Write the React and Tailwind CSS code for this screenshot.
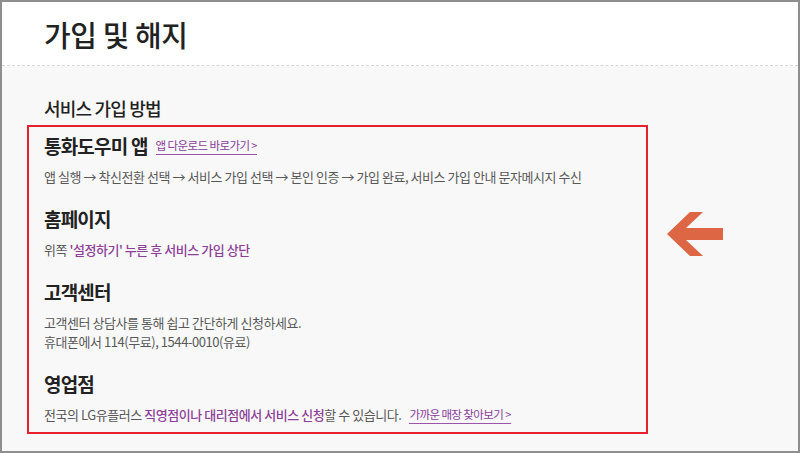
import React from 'react';

const font = { fontFamily: '"Noto Sans CJK KR", "Noto Sans", sans-serif' };

// Small underlined purple link
const MoreLink = ({ children }) => (
  <span className="ml-[8px] text-[11.5px] leading-[16px] tracking-[-0.6px] text-[#8a3d9d] border-b border-[#9a55aa] pb-[1px] whitespace-nowrap">
    {children}&nbsp;<span className="text-[11px]">&gt;</span>
  </span>
);

const Group = ({ title, link, children, first }) => (
  <div className={first ? '' : 'mt-[21px]'}>
    <div className="flex items-center">
      <h3 className="text-[19px] leading-[24px] font-bold tracking-[-0.8px] text-[#222]">{title}</h3>
      {link && <MoreLink>{link}</MoreLink>}
    </div>
    <div className="mt-[9px] text-[13px] leading-[19px] tracking-[-0.45px] text-[#585858]">{children}</div>
  </div>
);

export default function App() {
  return (
    <div style={font} className="w-[800px] h-[453px] border-2 border-[#8e8e8e] bg-[#f8f8f8] flex flex-col overflow-hidden">
      {/* page header */}
      <div className="h-[64px] shrink-0 bg-white border-b border-dashed border-[#d6d6d6] flex items-center pl-[42px]">
        <h1 className="text-[29px] leading-[36px] font-medium tracking-[-0.4px] text-[#222]">가입 및 해지</h1>
      </div>

      <div className="relative flex-1 pt-[30px]">
        <h2 className="ml-[42px] text-[18px] leading-[24px] font-medium tracking-[-0.8px] text-[#222]">서비스 가입 방법</h2>

        <div className="mt-[5px] ml-[25px] w-[621px] border-2 border-[#e5212d] pt-[7px] pb-[8px] pl-[15px]">
          <Group first title="통화도우미 앱" link="앱 다운로드 바로가기">
            앱 실행 → 착신전환 선택 → 서비스 가입 선택 → 본인 인증 → 가입 완료, 서비스 가입 안내 문자메시지 수신
          </Group>

          <Group title="홈페이지">
            위쪽 <span className="text-[#8d3f99] font-medium">'설정하기' 누른 후 서비스 가입 상단</span>
          </Group>

          <Group title="고객센터">
            <p>고객센터 상담사를 통해 쉽고 간단하게 신청하세요.</p>
            <p>휴대폰에서 114(무료), 1544-0010(유료)</p>
          </Group>

          <Group title="영업점">
            <div className="flex items-center">
              <span>
                전국의 LG유플러스 <span className="text-[#8d3f99] font-medium">직영점이나 대리점에서 서비스 신청</span>할 수 있습니다.
              </span>
              <MoreLink>가까운 매장 찾아보기</MoreLink>
            </div>
          </Group>
        </div>

        {/* annotation arrow */}
        <svg className="absolute left-[664px] top-[146px]" width="58" height="44" viewBox="0 0 58 44">
          <polygon points="1,22 24,0 37,0 20,16 57,16 57,28 20,28 37,44 24,44" fill="#dd6644" />
        </svg>
      </div>
    </div>
  );
}
